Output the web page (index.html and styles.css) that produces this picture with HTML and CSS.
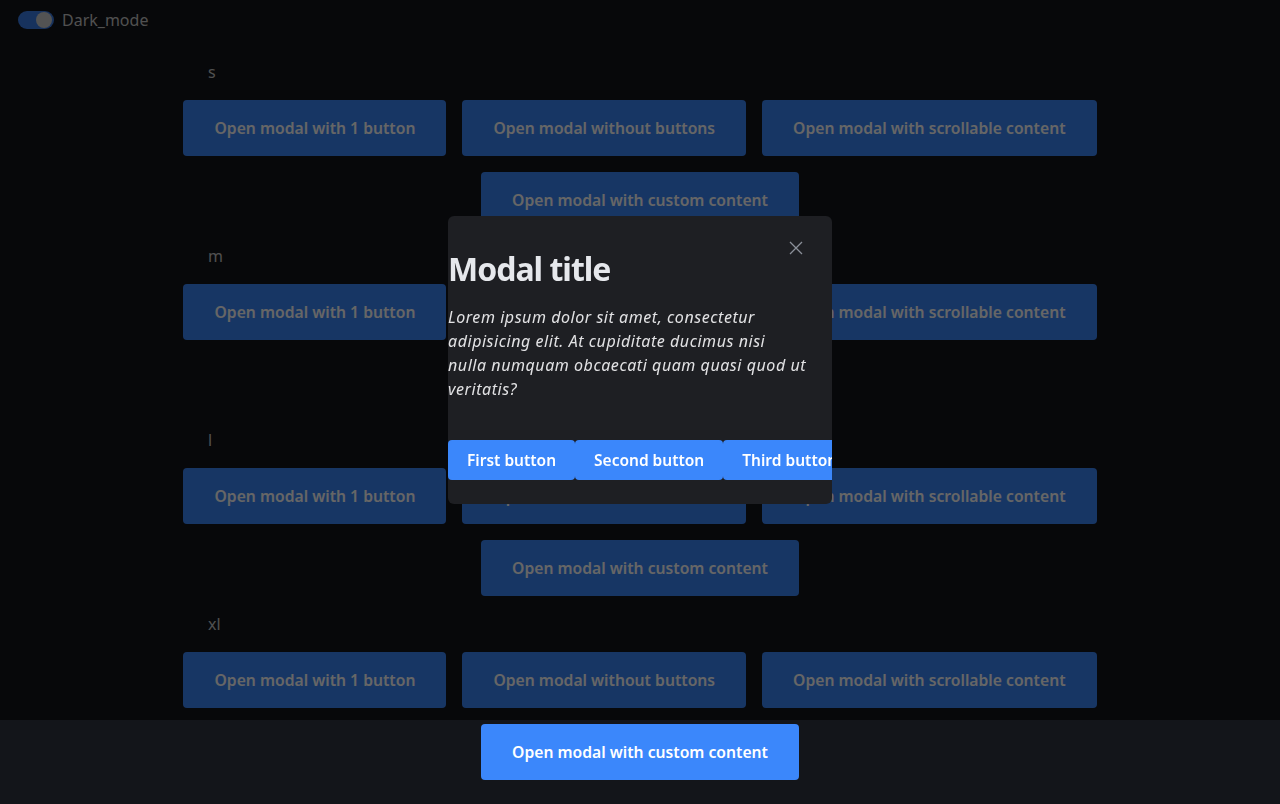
FILE: index.html
```html
<!DOCTYPE html>
<html lang="en">
<head>
<meta charset="utf-8">
<title>Modals</title>
<link rel="stylesheet" href="styles.css">
</head>
<body>
<header class="topbar">
  <label class="toggle">
    <span class="track"><span class="thumb"></span></span>
    <span class="toggle-label">Dark_mode</span>
  </label>
</header>
<main class="page">
  <section class="size-group">
    <div class="size-label">s</div>
    <div class="btn-row">
      <button class="btn">Open modal with 1 button</button>
      <button class="btn">Open modal without buttons</button>
      <button class="btn">Open modal with scrollable content</button>
      <button class="btn">Open modal with custom content</button>
    </div>
  </section>
  <section class="size-group">
    <div class="size-label">m</div>
    <div class="btn-row">
      <button class="btn">Open modal with 1 button</button>
      <button class="btn">Open modal without buttons</button>
      <button class="btn">Open modal with scrollable content</button>
      <button class="btn">Open modal with custom content</button>
    </div>
  </section>
  <section class="size-group">
    <div class="size-label">l</div>
    <div class="btn-row">
      <button class="btn">Open modal with 1 button</button>
      <button class="btn">Open modal without buttons</button>
      <button class="btn">Open modal with scrollable content</button>
      <button class="btn">Open modal with custom content</button>
    </div>
  </section>
  <section class="size-group">
    <div class="size-label">xl</div>
    <div class="btn-row">
      <button class="btn">Open modal with 1 button</button>
      <button class="btn">Open modal without buttons</button>
      <button class="btn">Open modal with scrollable content</button>
      <button class="btn">Open modal with custom content</button>
    </div>
  </section>
</main>
<div class="overlay">
  <div class="modal" role="dialog">
    <button class="modal-close" aria-label="Close">
      <svg width="16" height="16" viewBox="0 0 16 16"><path d="M2 2 L14 14 M14 2 L2 14" stroke="#8b9099" stroke-width="1.3" fill="none"/></svg>
    </button>
    <h2 class="modal-title">Modal title</h2>
    <p class="modal-body">Lorem ipsum dolor sit amet, consectetur adipisicing elit. At cupiditate ducimus nisi nulla numquam obcaecati quam quasi quod ut veritatis?</p>
    <div class="modal-actions">
      <button class="mbtn">First button</button>
      <button class="mbtn">Second button</button>
      <button class="mbtn">Third button</button>
    </div>
  </div>
</div>
</body>
</html>
```

FILE: styles.css
```css
html, body {
  margin: 0;
  padding: 0;
}
body {
  background: #13151a;
  color: #ffffff;
  font-family: "Noto Sans", "Open Sans", sans-serif;
  font-size: 16px;
  min-height: 900px;
}
.topbar {
  height: 40px;
  display: flex;
  align-items: center;
  padding-left: 18px;
}
.toggle {
  display: flex;
  align-items: center;
  gap: 8px;
}
.track {
  width: 36px;
  height: 18px;
  border-radius: 9px;
  background: #3b7ee8;
  display: flex;
  align-items: center;
  justify-content: flex-end;
  padding: 0 2px;
  box-sizing: border-box;
}
.thumb {
  width: 16px;
  height: 16px;
  border-radius: 50%;
  background: #cfcfcf;
}
.toggle-label {
  color: #c8c8c8;
  font-size: 16px;
}
.page {
  width: 960px;
  margin: 0 auto;
  padding-top: 4px;
}
.size-label {
  margin: 16px 0;
  padding-left: 48px;
  line-height: 24px;
  color: #c8c8c8;
  font-size: 16px;
}
.btn-row {
  display: flex;
  flex-wrap: wrap;
  justify-content: center;
  gap: 16px;
}
.btn {
  height: 56px;
  padding: 0 31px;
  border: none;
  border-radius: 4px;
  background: #3b87fb;
  color: #ffffff;
  font-family: inherit;
  font-size: 15.7px;
  font-weight: 600;
}
.overlay {
  position: fixed;
  top: 0;
  left: 0;
  right: 0;
  height: 720px;
  background: rgba(0, 0, 0, 0.6);
  display: flex;
  align-items: center;
  justify-content: center;
}
.modal {
  position: relative;
  width: 384px;
  box-sizing: border-box;
  padding: 33px 0 24px 0;
  background: #1e1f23;
  border-radius: 6px;
  overflow: hidden;
}
.modal-close {
  position: absolute;
  top: 24px;
  right: 28px;
  width: 16px;
  height: 16px;
  padding: 0;
  border: none;
  background: none;
  display: flex;
}
.modal-title {
  margin: 0;
  font-size: 32px;
  line-height: 40px;
  font-weight: 700;
  color: #e6e8ec;
  letter-spacing: -1px;
}
.modal-body {
  margin: 16px 0 0 0;
  padding-right: 24px;
  font-style: italic;
  font-size: 16px;
  line-height: 24px;
  letter-spacing: 0.55px;
  color: #e2e2e4;
}
.modal-actions {
  margin-top: 39px;
  display: flex;
}
.mbtn {
  flex: none;
  height: 40px;
  padding: 0 19px;
  border: none;
  border-radius: 4px;
  background: #3b87fb;
  color: #ffffff;
  font-family: inherit;
  font-size: 15.5px;
  font-weight: 600;
}
```
